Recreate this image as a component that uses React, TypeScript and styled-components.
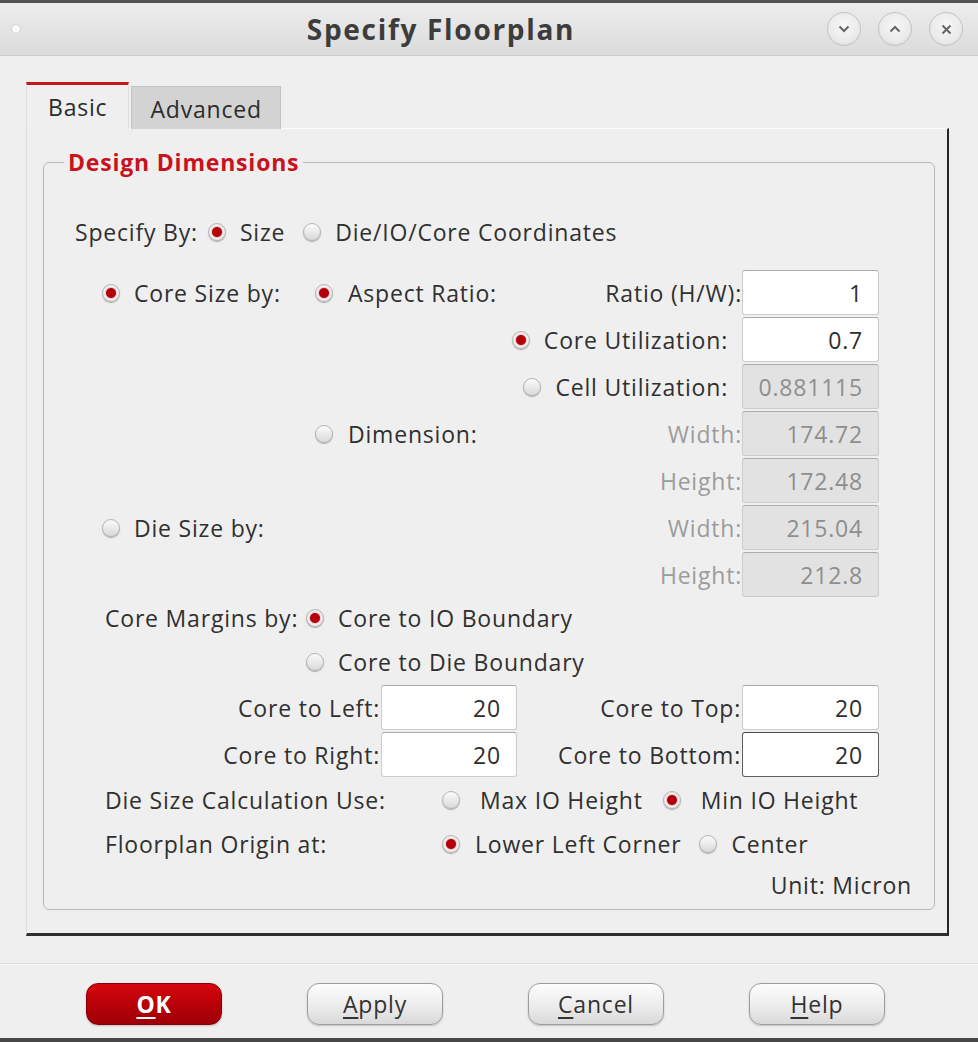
import React from "react"
import styled, { createGlobalStyle } from "styled-components"

const GlobalStyle = createGlobalStyle`
  html, body {
    margin: 0;
    padding: 0;
    background: #efefef;
  }
  body {
    font-family: "Open Sans", "Liberation Sans", sans-serif;
    color: #303030;
  }
`

interface RadioProps {
  label: string
  on?: boolean
  gap?: number
}

interface FieldProps {
  value: string
  disabled?: boolean
  focused?: boolean
}

const Radio = ({ label, on = false, gap = 14 }: RadioProps) => (
  <RadioItem $gap={gap}>
    <RadioDot $on={on} />
    <span>{label}</span>
  </RadioItem>
)

const Field = ({ value, disabled, focused }: FieldProps) => (
  <Input readOnly value={value} disabled={disabled} $focused={!!focused} />
)

const Mnemonic = ({ text }: { text: string }) => (
  <>
    <u>{text[0]}</u>
    {text.slice(1)}
  </>
)

const Chevron = ({ up }: { up?: boolean }) => (
  <svg width="12" height="8" viewBox="0 0 12 8">
    <path d={up ? "M1.5 6.5 L6 2 L10.5 6.5" : "M1.5 1.5 L6 6 L10.5 1.5"} fill="none" stroke="#666" strokeWidth="2" />
  </svg>
)

const Cross = () => (
  <svg width="11" height="11" viewBox="0 0 11 11">
    <path d="M1.5 1.5 L9.5 9.5 M9.5 1.5 L1.5 9.5" fill="none" stroke="#666" strokeWidth="2" />
  </svg>
)

export default function App() {
  return (
    <>
      <GlobalStyle />
      <Window>
        <TitleBar>
          <MenuDot />
          <Title>Specify Floorplan</Title>
          <Controls>
            <CtrlButton>
              <Chevron />
            </CtrlButton>
            <CtrlButton>
              <Chevron up />
            </CtrlButton>
            <CtrlButton>
              <Cross />
            </CtrlButton>
          </Controls>
        </TitleBar>

        <Body>
          <Tabs>
            <Tab $active>Basic</Tab>
            <Tab>Advanced</Tab>
          </Tabs>
          <Panel>
            <Group>
              <Legend>Design Dimensions</Legend>

              <SpecifyRow>
                <span>Specify By:</span>
                <Radio label="Size" on gap={14} />
                <Radio label="Die/IO/Core Coordinates" gap={14} />
              </SpecifyRow>

              <SizeGrid>
                <Cell $col={1}>
                  <Radio label="Core Size by:" on />
                </Cell>
                <Cell $col={2} $justify="space-between">
                  <Radio label="Aspect Ratio:" on gap={15} />
                  <span>Ratio (H/W):</span>
                </Cell>
                <Field value="1" />

                <Cell $col={2} $justify="flex-end" $pad={14}>
                  <Radio label="Core Utilization:" on />
                </Cell>
                <Field value="0.7" />

                <Cell $col={2} $justify="flex-end" $pad={14}>
                  <Radio label="Cell Utilization:" />
                </Cell>
                <Field value="0.881115" disabled />

                <Cell $col={2} $justify="space-between">
                  <Radio label="Dimension:" gap={15} />
                  <Dim>Width:</Dim>
                </Cell>
                <Field value="174.72" disabled />

                <Cell $col={2} $justify="flex-end">
                  <Dim>Height:</Dim>
                </Cell>
                <Field value="172.48" disabled />

                <Cell $col={1}>
                  <Radio label="Die Size by:" />
                </Cell>
                <Cell $col={2} $justify="flex-end">
                  <Dim>Width:</Dim>
                </Cell>
                <Field value="215.04" disabled />

                <Cell $col={2} $justify="flex-end">
                  <Dim>Height:</Dim>
                </Cell>
                <Field value="212.8" disabled />
              </SizeGrid>

              <MarginChoice>
                <span>Core Margins by:</span>
                <Radio label="Core to IO Boundary" on />
                <span />
                <Radio label="Core to Die Boundary" />
              </MarginChoice>

              <MarginGrid>
                <MarginLabel>Core to Left:</MarginLabel>
                <Field value="20" />
                <MarginLabel>Core to Top:</MarginLabel>
                <Field value="20" />
                <MarginLabel>Core to Right:</MarginLabel>
                <Field value="20" />
                <MarginLabel>Core to Bottom:</MarginLabel>
                <Field value="20" focused />
              </MarginGrid>

              <OptionRow>
                <OptionLabel>Die Size Calculation Use:</OptionLabel>
                <Radio label="Max IO Height" gap={20} />
                <Spacer $w={20} />
                <Radio label="Min IO Height" on gap={20} />
              </OptionRow>
              <OptionRow>
                <OptionLabel>Floorplan Origin at:</OptionLabel>
                <Radio label="Lower Left Corner" on gap={15} />
                <Spacer $w={17} />
                <Radio label="Center" gap={15} />
              </OptionRow>

              <UnitRow>Unit: Micron</UnitRow>
            </Group>
          </Panel>
        </Body>

        <ButtonBar>
          <PushButton $primary>
            <Mnemonic text="OK" />
          </PushButton>
          <PushButton>
            <Mnemonic text="Apply" />
          </PushButton>
          <PushButton>
            <Mnemonic text="Cancel" />
          </PushButton>
          <PushButton>
            <Mnemonic text="Help" />
          </PushButton>
        </ButtonBar>
      </Window>
    </>
  )
}

const Window = styled.div`
  width: 978px;
  height: 1042px;
  box-sizing: border-box;
  display: flex;
  flex-direction: column;
  overflow: hidden;
  background: #efefef;
  border-top: 3px solid #525252;
  border-bottom: 4px solid #474747;
  font-size: 23px;
  letter-spacing: 0.8px;
`

const TitleBar = styled.div`
  flex: none;
  height: 52px;
  display: flex;
  align-items: center;
  padding: 0 15px 0 11px;
  background: linear-gradient(#ededed, #dbdbdb);
  border-bottom: 1px solid #cdcdcd;
`

const MenuDot = styled.span`
  width: 8px;
  height: 8px;
  border-radius: 50%;
  background: #fafafa;
  border: 1px solid #d2d2d2;
`

const Title = styled.div`
  flex: 1;
  text-align: center;
  padding-left: 34px;
  font-size: 28px;
  font-weight: 700;
  color: #3c3c3c;
  letter-spacing: 1.7px;
`

const Controls = styled.div`
  display: flex;
  gap: 17px;
`

const CtrlButton = styled.span`
  width: 34px;
  height: 34px;
  box-sizing: border-box;
  border-radius: 50%;
  display: flex;
  align-items: center;
  justify-content: center;
  border: 1px solid #c3c3c3;
  background: radial-gradient(circle at 50% 40%, #f7f7f7, #e2e2e2);
  box-shadow: inset 0 -1px 1px rgba(0, 0, 0, 0.06);
`

const Body = styled.div`
  flex: 1;
  display: flex;
  flex-direction: column;
  padding: 27px 29px 0 26px;
`

const Tabs = styled.div`
  display: flex;
  align-items: flex-end;
  gap: 2px;
  height: 46px;
  position: relative;
  z-index: 1;
  margin-bottom: -1px;
`

const Tab = styled.div<{ $active?: boolean }>`
  box-sizing: border-box;
  height: ${(p) => (p.$active ? "47px" : "43px")};
  padding: 0 ${(p) => (p.$active ? "21px" : "18px")};
  display: flex;
  align-items: center;
  padding-top: ${(p) => (p.$active ? "0" : "2px")};
  color: #2c2c2c;
  background: ${(p) => (p.$active ? "#efefef" : "#d3d3d3")};
  border: 1px solid ${(p) => (p.$active ? "#dedede" : "#c3c3c3")};
  border-bottom: none;
  border-top: ${(p) => (p.$active ? "3px solid #c8161d" : "1px solid #c3c3c3")};
`

const Panel = styled.div`
  box-sizing: border-box;
  height: 808px;
  padding: 18px 12px 0 16px;
  border-top: 1px solid #fbfbfb;
  border-left: 1px solid #dddddd;
  border-right: 2px solid #262626;
  border-bottom: 3px solid #2e2e2e;
`

const Group = styled.fieldset`
  margin: 0;
  padding: 0 0 5px 0;
  min-width: 0;
  border: 1px solid #b9b9b9;
  border-radius: 6px;
  display: flex;
  flex-direction: column;
`

const Legend = styled.legend`
  margin-left: 20px;
  padding: 0 4px;
  line-height: 30px;
  font-size: 23px;
  font-weight: 700;
  color: #c8121c;
`

const RadioItem = styled.span<{ $gap: number }>`
  display: inline-flex;
  align-items: center;
  gap: ${(p) => p.$gap}px;
  white-space: nowrap;
`

const RadioDot = styled.span<{ $on: boolean }>`
  flex: none;
  width: 18px;
  height: 18px;
  box-sizing: border-box;
  border-radius: 50%;
  border: 1px solid #b5b5b5;
  background: ${(p) =>
    p.$on
      ? "radial-gradient(circle, #b5000b 0 4.5px, #e6cfd1 5.5px, #f4eeee 6.5px, #dadada 100%)"
      : "linear-gradient(#fbfbfb, #d9d9d9)"};
  box-shadow: 0 1px 1px rgba(0, 0, 0, 0.3);
`

const SpecifyRow = styled.div`
  height: 46px;
  margin-top: 32px;
  padding-left: 31px;
  display: flex;
  align-items: center;
  gap: 10px;
  white-space: nowrap;

  & > :nth-child(3) {
    margin-left: 8px;
  }
`

const SizeGrid = styled.div`
  margin: 15px 0 0 58px;
  display: grid;
  grid-template-columns: 213px 427px 137px;
  grid-auto-rows: 45px;
  row-gap: 2px;
`

const Cell = styled.div<{ $col: number; $justify?: string; $pad?: number }>`
  grid-column: ${(p) => p.$col};
  display: flex;
  align-items: center;
  justify-content: ${(p) => p.$justify || "flex-start"};
  padding-right: ${(p) => p.$pad || 0}px;
  white-space: nowrap;
`

const Dim = styled.span`
  color: #9c9c9c;
`

const Input = styled.input<{ $focused: boolean }>`
  box-sizing: border-box;
  width: 100%;
  height: 45px;
  margin: 0;
  padding: 0 15px 0 0;
  font: inherit;
  letter-spacing: inherit;
  text-align: right;
  color: #2e2e2e;
  background: #ffffff;
  border: 1px solid ${(p) => (p.$focused ? "#5e5e5e" : "#cccccc")};
  border-top-color: ${(p) => (p.$focused ? "#4a4a4a" : "#ababab")};
  border-radius: 3px;
  outline: none;

  &:disabled {
    color: #8e8e8e;
    background: #e2e2e2;
    -webkit-text-fill-color: #8e8e8e;
    opacity: 1;
  }
`

const MarginChoice = styled.div`
  margin: 0 0 0 61px;
  display: grid;
  grid-template-columns: 201px auto;
  grid-template-rows: 42px 46px;
  align-items: center;
  justify-content: start;
  white-space: nowrap;
`

const MarginGrid = styled.div`
  margin-left: 61px;
  display: grid;
  grid-template-columns: 276px 136px 225px 137px;
  grid-auto-rows: 46px;
  row-gap: 1px;
`

const MarginLabel = styled.span`
  display: flex;
  align-items: center;
  justify-content: flex-end;
  padding-right: 1px;
  white-space: nowrap;
`

const OptionRow = styled.div`
  height: 44px;
  margin-left: 61px;
  display: flex;
  align-items: center;
  white-space: nowrap;
`

const OptionLabel = styled.span`
  width: 337px;
  flex: none;
`

const Spacer = styled.span<{ $w: number }>`
  width: ${(p) => p.$w}px;
  flex: none;
`

const UnitRow = styled.div`
  height: 38px;
  display: flex;
  align-items: center;
  justify-content: flex-end;
  padding-right: 22px;
`

const ButtonBar = styled.div`
  flex: none;
  height: 75px;
  box-sizing: border-box;
  display: flex;
  align-items: flex-start;
  gap: 85px;
  padding: 19px 0 0 86px;
  border-top: 1px solid #dcdcdc;
  box-shadow: inset 0 1px 0 #fafafa;
`

const PushButton = styled.button<{ $primary?: boolean }>`
  width: 136px;
  height: 42px;
  padding: 0;
  border-radius: 12px;
  font-family: inherit;
  font-size: 23px;
  letter-spacing: 0.8px;
  font-weight: ${(p) => (p.$primary ? 700 : 400)};
  color: ${(p) => (p.$primary ? "#ffffff" : "#333333")};
  background: ${(p) =>
    p.$primary ? "linear-gradient(#d6060d, #b30008 60%, #9e0007)" : "linear-gradient(#fdfdfd, #ececec 55%, #d9d9d9)"};
  border: 1px solid ${(p) => (p.$primary ? "#860006" : "#9d9d9d")};
  box-shadow: 0 1px 2px rgba(0, 0, 0, 0.2);

  u {
    text-underline-offset: 4px;
  }
`
